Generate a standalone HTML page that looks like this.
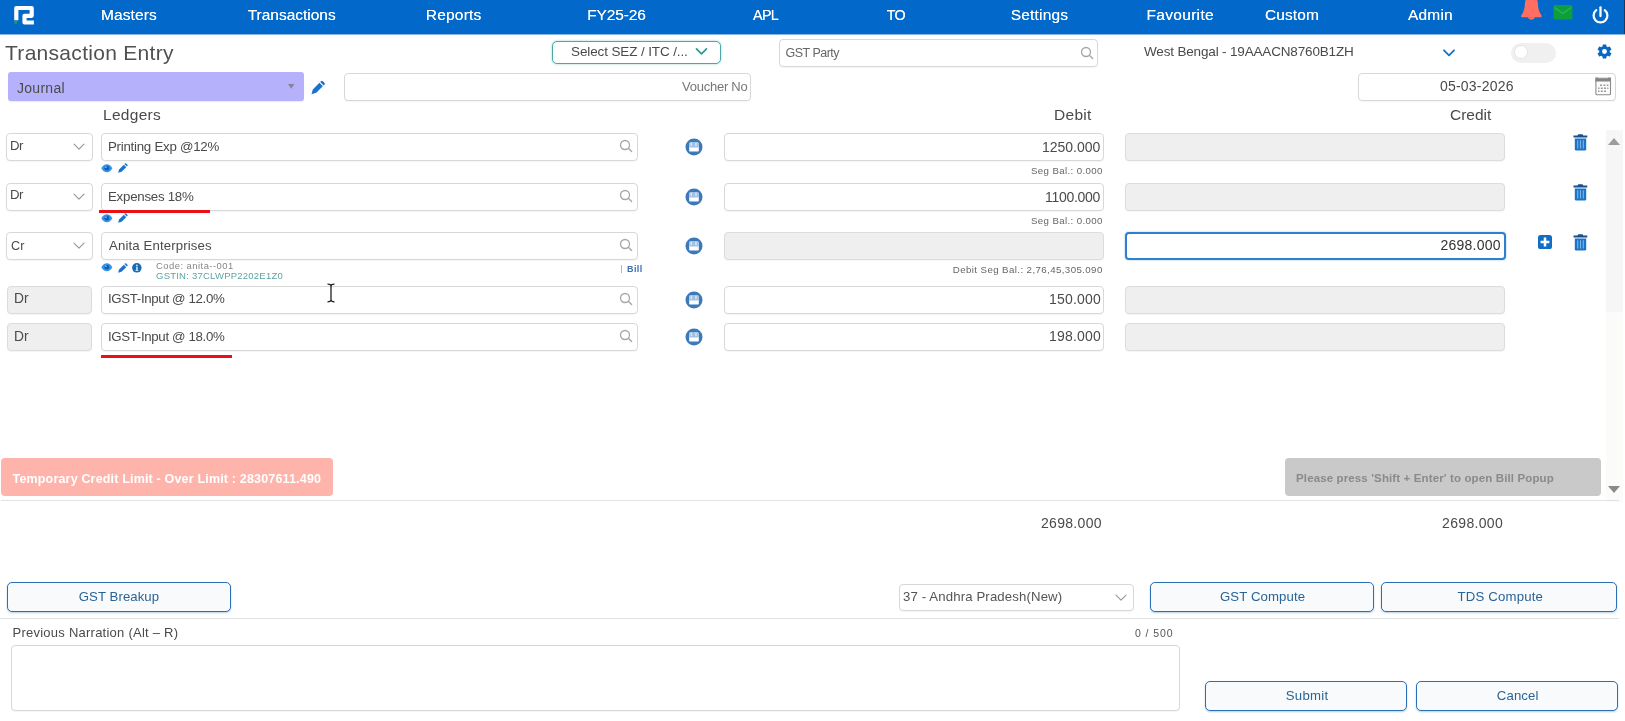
<!DOCTYPE html>
<html lang="en"><head><meta charset="utf-8"><title>Transaction Entry</title>
<style>
html,body{margin:0;padding:0;background:#fff;}
body{width:1625px;height:721px;overflow:hidden;font-family:"Liberation Sans",Arial,sans-serif;}
#app{will-change:transform;position:relative;width:1625px;height:721px;overflow:hidden;background:#fff;}
#app *{box-sizing:border-box;}
.abs,.t,.box,.btn,.alert,.journal,.toggle,.hr,.red,header,svg{position:absolute;}
.t{white-space:nowrap;line-height:1;display:block;margin:0;padding:0;font-weight:400;text-decoration:none;}
.t.nav{text-shadow:0 0 .6px rgba(255,255,255,.8);}
header{background:#0268c9;}
.box{border:1px solid #d8d8d8;border-radius:4px;background:#fff;box-shadow:0 1px 1px rgba(0,0,0,.04);}
.box.dis{background:#efefef;border-color:#dcdcdc;}
.box.focus{border:2px solid #2f7fcf;box-shadow:0 0 2px rgba(47,127,207,.5);}
.box.sez{border:1.5px solid #4aa9a4;border-radius:5px;box-shadow:0 0 2.5px rgba(74,169,164,.55);}
.journal{background:#b5b2fb;border-radius:3px;box-shadow:0 1px 1px rgba(0,0,0,.08);}
.toggle{border-radius:10px;background:#f0f0f0;}
.alert{border-radius:4px;}
.alert.pink{background:#ffb4ab;}
.alert.grey{background:#c9c9c9;}
.btn{border:1px solid #2a6fb3;border-radius:5px;background:#f8fafc;box-shadow:0 1px 2px rgba(42,111,179,.35);}
.hr{height:1px;background:#dde3e6;}
.red{background:#ea1016;height:3px;}
svg{overflow:visible;}
</style></head>
<body>
<div id="app">
<header style="left:0px;top:0px;width:1625px;height:34px;">
  <div class="abs" style="left:1624px;top:0;width:1px;height:34px;background:#123a66"></div>
  <a class="t nav" style="left:101px;top:7.38px;font-size:15.5px;color:#fff;letter-spacing:0.105px;">Masters</a>
  <a class="t nav" style="left:247.7px;top:7.38px;font-size:15.5px;color:#fff;letter-spacing:-0.010px;">Transactions</a>
  <a class="t nav" style="left:425.8px;top:7.38px;font-size:15.5px;color:#fff;letter-spacing:0.196px;">Reports</a>
  <a class="t nav" style="left:587.3px;top:7.38px;font-size:15.5px;color:#fff;letter-spacing:-0.155px;">FY25-26</a>
  <a class="t nav" style="left:753px;top:8.4px;font-size:14.3px;color:#fff;letter-spacing:-0.636px;">APL</a>
  <a class="t nav" style="left:886.8px;top:8.4px;font-size:14.3px;color:#fff;letter-spacing:-0.775px;">TO</a>
  <a class="t nav" style="left:1010.8px;top:7.38px;font-size:15.5px;color:#fff;letter-spacing:0.178px;">Settings</a>
  <a class="t nav" style="left:1146.5px;top:7.38px;font-size:15.5px;color:#fff;letter-spacing:0.314px;">Favourite</a>
  <a class="t nav" style="left:1265px;top:7.38px;font-size:15.5px;color:#fff;letter-spacing:0.102px;">Custom</a>
  <a class="t nav" style="left:1408px;top:7.38px;font-size:15.5px;color:#fff;letter-spacing:0.172px;">Admin</a>
  <svg class="logo" style="left:0px;top:0px" width="60" height="34" viewBox="0 0 60 34"><path d="M16.300 20.300V8H31.700V15.800H24.500V22.500H33.900" fill="none" stroke="#fff" stroke-width="4.200" stroke-linejoin="round"/><rect x="14.300" y="21" width="2.800" height="2.800" fill="#16a34a"/></svg>
  <svg class="bell" style="left:1519px;top:0px" width="26" height="24" viewBox="0 0 26 24"><path d="M12.400 -4c-4.200 0-6.300 3.200-6.500 7.600-.2 5.300-1.300 9-3.700 11.800v1.900h20.400v-1.900c-2.400-2.800-3.500-6.500-3.700-11.800C18.700-.8 16.600-4 12.400-4z" fill="#ff6e61"/><path d="M8.800 17.300a3.700 3.200 0 0 0 7.200 0z" fill="#ff6e61"/></svg>
  <svg class="mail" style="left:1553px;top:4px" width="20" height="16" viewBox="0 0 20 16"><rect x="0.400" y="0.900" width="19" height="14.500" rx="1.500" fill="#0d9f3c"/><path d="M1.500 3.500l8.400 6 8.400-6" fill="none" stroke="#2bb55a" stroke-width="1.300"/></svg>
  <svg class="power" style="left:1590px;top:4.5px" width="22" height="22" viewBox="0 0 22 22"><path d="M6.300 5.100a6.900 6.900 0 1 0 8.400 0" fill="none" stroke="#fff" stroke-width="2.200" stroke-linecap="round"/><path d="M10.500 2.300v8.700" stroke="#fff" stroke-width="2.300" stroke-linecap="round"/></svg>
</header>
<div class="box sez" style="left:552px;top:41px;width:169px;height:23px;">
  <span class="t" style="left:18px;top:2.87px;font-size:13.5px;color:#4a4a4a;letter-spacing:-0.126px;">Select SEZ / ITC /...</span>
  <svg style="left:142px;top:5px" width="13" height="9" viewBox="0 0 13 9"><path d="M1.500 1.800l5 5 5-5" fill="none" stroke="#2a9b95" stroke-width="1.700" stroke-linecap="round" stroke-linejoin="round"/></svg>
</div>
<div class="box input" style="left:779px;top:39px;width:319px;height:28px;">
  <span class="t" style="left:5.5px;top:7.22px;font-size:12.5px;color:#666;letter-spacing:-0.512px;">GST Party</span>
  <svg class="search" style="left:299.6px;top:5.7px" width="15" height="15" viewBox="0 0 15 15"><circle cx="6" cy="6" r="4.500" fill="none" stroke="#a6a6a6" stroke-width="1.300"/><path d="M9.300 9.300l3.300 3.300" stroke="#a6a6a6" stroke-width="1.400" stroke-linecap="round"/></svg>
</div>
<div class="toggle" style="left:1511px;top:43px;width:45px;height:20px;">
  <div class="abs knob" style="left:2.5px;top:1.5px;width:14.5px;height:14.5px;border-radius:50%;background:#fff;border:1px solid #e4e4e4;"></div>
</div>
<div class="journal" style="left:8px;top:72px;width:296px;height:29px;">
  <span class="t" style="left:9px;top:8.65px;font-size:14px;color:#4a4a4a;letter-spacing:0.282px;">Journal</span>
  <svg class="caret" style="left:280.2px;top:12.1px" width="6.4" height="4.8" viewBox="0 0 7 5"><path d="M0 0h7L3.500 5z" fill="#84839f"/></svg>
</div>
<div class="box input" style="left:344px;top:73px;width:407px;height:28px;">
  <span class="t" style="left:337px;top:5.75px;font-size:13px;color:#777;letter-spacing:-0.245px;">Voucher No</span>
</div>
<div class="box input" style="left:1357.5px;top:73px;width:258.5px;height:28px;">
  <span class="t" style="left:81.5px;top:5.15px;font-size:14px;color:#4a4a4a;letter-spacing:0.208px;">05-03-2026</span>
  <svg class="cal" style="left:236.5px;top:3px" width="17" height="19" viewBox="0 0 17 19"><rect x="0.900" y="1.300" width="14.600" height="16.400" rx="1" fill="#fbfbfb" stroke="#8c8c8c" stroke-width="1.100"/><path d="M0.400 0.600h2.200l1 1h9l1-1h2.400v4H0.400z" fill="#858585"/><path d="M5 8.300h2M8.400 8.300h2M11.800 8.300h1.600M3 11.200h1.500M5.800 11.200h2M9 11.200h2M12.200 11.200h1.200M3 14.200h1.500M5.800 14.200h2M9 14.200h2" stroke="#9a9a9a" stroke-width="1.400"/></svg>
</div>
<div class="row" id="row1">
<div class="box select" style="left:6px;top:133px;width:87px;height:28px;">
  <span class="t" style="left:3px;top:4.83px;font-size:13.2px;color:#4a4a4a;letter-spacing:-0.524px;">Dr</span>
  <svg class="chev" style="left:66px;top:9.2px" width="12" height="8" viewBox="0 0 12 8"><path d="M1 1.200l5 5 5-5" fill="none" stroke="#9a9a9a" stroke-width="1.200" stroke-linecap="round" stroke-linejoin="round"/></svg>
</div>
<div class="box input ledger" style="left:101px;top:133px;width:537px;height:28px;">
  <span class="t" style="left:6px;top:6.24px;font-size:13.3px;color:#4a4a4a;letter-spacing:-0.261px;">Printing Exp @12%</span>
  <svg class="search" style="left:516.9px;top:5.4px" width="15" height="15" viewBox="0 0 15 15"><circle cx="6" cy="6" r="4.500" fill="none" stroke="#a6a6a6" stroke-width="1.300"/><path d="M9.300 9.300l3.300 3.300" stroke="#a6a6a6" stroke-width="1.400" stroke-linecap="round"/></svg>
</div>
<div class="box input" style="left:724px;top:133px;width:380px;height:28px;">
  <span class="t" style="left:317px;top:5.9px;font-size:14px;color:#4a4a4a;letter-spacing:-0.015px;">1250.000</span>
</div>
<div class="box dis" style="left:1125px;top:133px;width:380px;height:28px;"></div>
<span class="t small" style="left:1031px;top:165.69px;font-size:9.7px;color:#666;letter-spacing:0.367px;">Seg Bal.: 0.000</span>
<svg class="narr" style="left:685.3px;top:137.7px" width="18" height="18" viewBox="0 0 18 18"><circle cx="9" cy="9" r="8.500" fill="#3b79b8"/><rect x="4.200" y="4.600" width="9.600" height="9" rx="1.200" fill="#fff"/><rect x="4.200" y="4.600" width="9.600" height="5" rx="1" fill="#9fc0e4"/><rect x="5.600" y="4.600" width="1.500" height="3.600" fill="#d7e6f5"/><rect x="10.200" y="4.600" width="1.500" height="3.600" fill="#d7e6f5"/></svg>
<svg class="eye" style="left:101.2px;top:163.9px" width="11.700" height="8.500" viewBox="0 0 12 9"><path d="M0.200 4.500C1.600 1.700 3.700 0.300 6 0.300s4.400 1.400 5.800 4.200C10.400 7.300 8.300 8.700 6 8.700S1.600 7.300 0.200 4.500z" fill="#3495e6"/><circle cx="6" cy="4.400" r="2.600" fill="#0f5fb4"/><circle cx="5" cy="3.400" r="0.900" fill="#7cc0f2"/></svg>
<svg class="pencil" style="left:117.7px;top:163px" width="9.6" height="10.3" viewBox="0 0 15 15"><path d="M0.200 14.800l1.500-5.300 7.400-7.400 3.800 3.800-7.400 7.400z" fill="#1c72c9"/><path d="M10 1.200l.9-.9a1.400 1.400 0 0 1 2 0l1.800 1.800a1.400 1.400 0 0 1 0 2l-.9.900z" fill="#1c72c9"/></svg>
<svg class="trash" style="left:1573.3px;top:134px" width="15" height="17" viewBox="0 0 15 17"><path d="M5.300 0.200h4.200l0.800 1.300h4v1.900H0.500V1.500h4z" fill="#1a4f8c"/><path d="M1.800 4.500h11.400v10.700a1.300 1.300 0 0 1-1.300 1.300H3.100a1.300 1.300 0 0 1-1.300-1.300z" fill="#1a74ca"/><path d="M4.700 6.300v8.200M7.500 6.300v8.200M10.300 6.300v8.200" stroke="#7fb4e6" stroke-width="1.100"/></svg>
</div>
<div class="row" id="row2">
<div class="box select" style="left:6px;top:183px;width:87px;height:28px;">
  <span class="t" style="left:3px;top:4.33px;font-size:13.2px;color:#4a4a4a;letter-spacing:-0.524px;">Dr</span>
  <svg class="chev" style="left:66px;top:9.2px" width="12" height="8" viewBox="0 0 12 8"><path d="M1 1.200l5 5 5-5" fill="none" stroke="#9a9a9a" stroke-width="1.200" stroke-linecap="round" stroke-linejoin="round"/></svg>
</div>
<div class="box input ledger" style="left:101px;top:183px;width:537px;height:28px;">
  <span class="t" style="left:6px;top:6.24px;font-size:13.3px;color:#4a4a4a;letter-spacing:-0.262px;">Expenses 18%</span>
  <svg class="search" style="left:516.9px;top:5.4px" width="15" height="15" viewBox="0 0 15 15"><circle cx="6" cy="6" r="4.500" fill="none" stroke="#a6a6a6" stroke-width="1.300"/><path d="M9.300 9.300l3.300 3.300" stroke="#a6a6a6" stroke-width="1.400" stroke-linecap="round"/></svg>
</div>
<div class="box input" style="left:724px;top:183px;width:380px;height:28px;">
  <span class="t" style="left:320px;top:5.9px;font-size:14px;color:#4a4a4a;letter-spacing:-0.295px;">1100.000</span>
</div>
<div class="box dis" style="left:1125px;top:183px;width:380px;height:28px;"></div>
<span class="t small" style="left:1031px;top:215.69px;font-size:9.7px;color:#666;letter-spacing:0.367px;">Seg Bal.: 0.000</span>
<svg class="narr" style="left:685.3px;top:187.7px" width="18" height="18" viewBox="0 0 18 18"><circle cx="9" cy="9" r="8.500" fill="#3b79b8"/><rect x="4.200" y="4.600" width="9.600" height="9" rx="1.200" fill="#fff"/><rect x="4.200" y="4.600" width="9.600" height="5" rx="1" fill="#9fc0e4"/><rect x="5.600" y="4.600" width="1.500" height="3.600" fill="#d7e6f5"/><rect x="10.200" y="4.600" width="1.500" height="3.600" fill="#d7e6f5"/></svg>
<svg class="eye" style="left:101.2px;top:213.5px" width="11.700" height="8.500" viewBox="0 0 12 9"><path d="M0.200 4.500C1.600 1.700 3.700 0.300 6 0.300s4.400 1.400 5.800 4.200C10.400 7.300 8.300 8.700 6 8.700S1.600 7.300 0.200 4.500z" fill="#3495e6"/><circle cx="6" cy="4.400" r="2.600" fill="#0f5fb4"/><circle cx="5" cy="3.400" r="0.900" fill="#7cc0f2"/></svg>
<svg class="pencil" style="left:117.7px;top:212.6px" width="9.6" height="10.3" viewBox="0 0 15 15"><path d="M0.200 14.800l1.500-5.300 7.400-7.400 3.800 3.800-7.400 7.400z" fill="#1c72c9"/><path d="M10 1.200l.9-.9a1.400 1.400 0 0 1 2 0l1.800 1.800a1.400 1.400 0 0 1 0 2l-.9.900z" fill="#1c72c9"/></svg>
<svg class="trash" style="left:1573.3px;top:184px" width="15" height="17" viewBox="0 0 15 17"><path d="M5.300 0.200h4.200l0.800 1.300h4v1.900H0.500V1.500h4z" fill="#1a4f8c"/><path d="M1.800 4.500h11.400v10.700a1.300 1.300 0 0 1-1.300 1.300H3.100a1.300 1.300 0 0 1-1.300-1.300z" fill="#1a74ca"/><path d="M4.700 6.300v8.200M7.500 6.300v8.200M10.300 6.300v8.200" stroke="#7fb4e6" stroke-width="1.100"/></svg>
<div class="red" style="left:99px;top:210px;width:111px;"></div>
</div>
<div class="row" id="row3">
<div class="box select" style="left:6px;top:232px;width:87px;height:28px;">
  <span class="t" style="left:4px;top:6.63px;font-size:12.6px;color:#4a4a4a;letter-spacing:0.205px;">Cr</span>
  <svg class="chev" style="left:66px;top:9.2px" width="12" height="8" viewBox="0 0 12 8"><path d="M1 1.200l5 5 5-5" fill="none" stroke="#9a9a9a" stroke-width="1.200" stroke-linecap="round" stroke-linejoin="round"/></svg>
</div>
<div class="box input ledger" style="left:101px;top:232px;width:537px;height:28px;">
  <span class="t" style="left:7px;top:5.83px;font-size:13.2px;color:#4a4a4a;letter-spacing:0.136px;">Anita Enterprises</span>
  <svg class="search" style="left:516.9px;top:5.4px" width="15" height="15" viewBox="0 0 15 15"><circle cx="6" cy="6" r="4.500" fill="none" stroke="#a6a6a6" stroke-width="1.300"/><path d="M9.300 9.300l3.300 3.300" stroke="#a6a6a6" stroke-width="1.400" stroke-linecap="round"/></svg>
</div>
<div class="box dis" style="left:724px;top:232px;width:380px;height:28px;"></div>
<div class="box focus" style="left:1125px;top:231.5px;width:380.5px;height:28.5px;">
  <span class="t" style="left:313.5px;top:4.65px;font-size:14px;color:#333;letter-spacing:0.235px;">2698.000</span>
</div>
<span class="t small" style="left:952.8px;top:264.89px;font-size:9.7px;color:#666;letter-spacing:0.405px;">Debit Seg Bal.: 2,76,45,305.090</span>
<span class="t small" style="left:156px;top:260.94px;font-size:9.4px;color:#858585;letter-spacing:0.492px;">Code: anita--001</span>
<span class="t small" style="left:156px;top:270.96px;font-size:9.5px;color:#5aa5a5;letter-spacing:0.238px;">GSTIN: 37CLWPP2202E1Z0</span>
<span class="t small" style="left:627px;top:265.48px;font-size:9px;color:#3a72b4;font-weight:700;letter-spacing:0.433px;">Bill</span>
<svg class="narr" style="left:685.3px;top:236.7px" width="18" height="18" viewBox="0 0 18 18"><circle cx="9" cy="9" r="8.500" fill="#3b79b8"/><rect x="4.200" y="4.600" width="9.600" height="9" rx="1.200" fill="#fff"/><rect x="4.200" y="4.600" width="9.600" height="5" rx="1" fill="#9fc0e4"/><rect x="5.600" y="4.600" width="1.500" height="3.600" fill="#d7e6f5"/><rect x="10.200" y="4.600" width="1.500" height="3.600" fill="#d7e6f5"/></svg>
<svg class="eye" style="left:101.2px;top:263.4px" width="11.700" height="8.500" viewBox="0 0 12 9"><path d="M0.200 4.500C1.600 1.700 3.700 0.300 6 0.300s4.400 1.400 5.800 4.200C10.400 7.300 8.300 8.700 6 8.700S1.600 7.300 0.200 4.500z" fill="#3495e6"/><circle cx="6" cy="4.400" r="2.600" fill="#0f5fb4"/><circle cx="5" cy="3.400" r="0.900" fill="#7cc0f2"/></svg>
<svg class="pencil" style="left:117.7px;top:262.5px" width="9.6" height="10.3" viewBox="0 0 15 15"><path d="M0.200 14.800l1.500-5.300 7.400-7.400 3.800 3.800-7.400 7.400z" fill="#1c72c9"/><path d="M10 1.200l.9-.9a1.400 1.400 0 0 1 2 0l1.800 1.800a1.400 1.400 0 0 1 0 2l-.9.900z" fill="#1c72c9"/></svg>
<svg class="info" style="left:132.4px;top:262.9px" width="9.700" height="9.700" viewBox="0 0 10 10"><circle cx="5" cy="5" r="4.900" fill="#1a6ab4"/><rect x="4.200" y="4.100" width="1.700" height="3.900" fill="#bfe3fa"/><circle cx="5" cy="2.500" r="1" fill="#bfe3fa"/><rect x="3.500" y="7.400" width="3.100" height="0.900" fill="#bfe3fa"/></svg>
<svg class="plus" style="left:1538px;top:234.9px" width="14" height="14" viewBox="0 0 14 14"><rect x="0" y="0" width="14" height="14" rx="2.600" fill="#0f6fc6"/><path d="M2.600 7h8.800M7 2.600v8.800" stroke="#fff" stroke-width="2.500"/></svg>
<svg class="trash" style="left:1573.3px;top:233.9px" width="15" height="17" viewBox="0 0 15 17"><path d="M5.300 0.200h4.200l0.800 1.300h4v1.900H0.500V1.500h4z" fill="#1a4f8c"/><path d="M1.800 4.500h11.400v10.700a1.300 1.300 0 0 1-1.300 1.300H3.100a1.300 1.300 0 0 1-1.300-1.300z" fill="#1a74ca"/><path d="M4.700 6.300v8.200M7.500 6.300v8.200M10.300 6.300v8.200" stroke="#7fb4e6" stroke-width="1.100"/></svg>
<div class="abs" style="left:620.5px;top:264.5px;width:1.3px;height:8.5px;background:#f59a9a"></div>
</div>
<div class="row" id="row4">
<div class="box dis" style="left:7px;top:286px;width:85px;height:28px;">
  <span class="t" style="left:6px;top:5.07px;font-size:13.8px;color:#4a4a4a;letter-spacing:0.036px;">Dr</span>
</div>
<div class="box input ledger" style="left:101px;top:286px;width:537px;height:28px;">
  <span class="t" style="left:6px;top:5.49px;font-size:13.3px;color:#4a4a4a;letter-spacing:-0.357px;">IGST-Input @ 12.0%</span>
  <svg class="search" style="left:516.9px;top:5.4px" width="15" height="15" viewBox="0 0 15 15"><circle cx="6" cy="6" r="4.500" fill="none" stroke="#a6a6a6" stroke-width="1.300"/><path d="M9.300 9.300l3.300 3.300" stroke="#a6a6a6" stroke-width="1.400" stroke-linecap="round"/></svg>
  <svg class="ibeam" style="left:224px;top:-4px" width="10" height="20" viewBox="0 0 10 20"><path d="M1.500 1.200c2 0 3.500.4 3.500 1.800v14c0 1.400-1.500 1.800-3.500 1.800M8.500 1.200c-2 0-3.500.4-3.500 1.800M8.500 18.800c-2 0-3.500-.4-3.500-1.800" fill="none" stroke="#222" stroke-width="1.300"/></svg>
</div>
<div class="box input" style="left:724px;top:286px;width:380px;height:28px;">
  <span class="t" style="left:324px;top:5.15px;font-size:14px;color:#4a4a4a;letter-spacing:0.197px;">150.000</span>
</div>
<div class="box dis" style="left:1125px;top:286px;width:380px;height:28px;"></div>
<svg class="narr" style="left:685.3px;top:290.7px" width="18" height="18" viewBox="0 0 18 18"><circle cx="9" cy="9" r="8.500" fill="#3b79b8"/><rect x="4.200" y="4.600" width="9.600" height="9" rx="1.200" fill="#fff"/><rect x="4.200" y="4.600" width="9.600" height="5" rx="1" fill="#9fc0e4"/><rect x="5.600" y="4.600" width="1.500" height="3.600" fill="#d7e6f5"/><rect x="10.200" y="4.600" width="1.500" height="3.600" fill="#d7e6f5"/></svg>
</div>
<div class="row" id="row5">
<div class="box dis" style="left:7px;top:323px;width:85px;height:28px;">
  <span class="t" style="left:6px;top:5.57px;font-size:13.8px;color:#4a4a4a;letter-spacing:0.036px;">Dr</span>
</div>
<div class="box input ledger" style="left:101px;top:323px;width:537px;height:28px;">
  <span class="t" style="left:6px;top:5.99px;font-size:13.3px;color:#4a4a4a;letter-spacing:-0.357px;">IGST-Input @ 18.0%</span>
  <svg class="search" style="left:516.9px;top:5.4px" width="15" height="15" viewBox="0 0 15 15"><circle cx="6" cy="6" r="4.500" fill="none" stroke="#a6a6a6" stroke-width="1.300"/><path d="M9.300 9.300l3.300 3.300" stroke="#a6a6a6" stroke-width="1.400" stroke-linecap="round"/></svg>
</div>
<div class="box input" style="left:724px;top:323px;width:380px;height:28px;">
  <span class="t" style="left:324px;top:5.15px;font-size:14px;color:#4a4a4a;letter-spacing:0.197px;">198.000</span>
</div>
<div class="box dis" style="left:1125px;top:323px;width:380px;height:28px;"></div>
<svg class="narr" style="left:685.3px;top:327.7px" width="18" height="18" viewBox="0 0 18 18"><circle cx="9" cy="9" r="8.500" fill="#3b79b8"/><rect x="4.200" y="4.600" width="9.600" height="9" rx="1.200" fill="#fff"/><rect x="4.200" y="4.600" width="9.600" height="5" rx="1" fill="#9fc0e4"/><rect x="5.600" y="4.600" width="1.500" height="3.600" fill="#d7e6f5"/><rect x="10.200" y="4.600" width="1.500" height="3.600" fill="#d7e6f5"/></svg>
<div class="red" style="left:101px;top:355px;width:131px;"></div>
</div>
<div class="alert pink" style="left:1px;top:458px;width:332px;height:38px;">
  <span class="t" style="left:11.5px;top:14.92px;font-size:12.5px;color:#fff;font-weight:700;letter-spacing:0.175px;">Temporary Credit Limit - Over Limit : 28307611.490</span>
</div>
<div class="alert grey" style="left:1284.5px;top:458px;width:316.5px;height:38px;">
  <span class="t" style="left:11.5px;top:15.27px;font-size:11.5px;color:#8a8a8a;font-weight:700;letter-spacing:0.130px;">Please press 'Shift + Enter' to open Bill Popup</span>
</div>
<div class="btn" style="left:7px;top:582px;width:224px;height:30px;">
  <span class="t" style="left:70.75px;top:7.08px;font-size:13.2px;color:#2a6496;letter-spacing:0.069px;">GST Breakup</span>
</div>
<div class="box select" style="left:899px;top:583.5px;width:235px;height:27px;">
  <span class="t" style="left:3px;top:5.58px;font-size:13.2px;color:#555;letter-spacing:0.132px;">37 - Andhra Pradesh(New)</span>
  <svg class="chev" style="left:215px;top:9px" width="12" height="8" viewBox="0 0 12 8"><path d="M1 1.200l5 5 5-5" fill="none" stroke="#9a9a9a" stroke-width="1.200" stroke-linecap="round" stroke-linejoin="round"/></svg>
</div>
<div class="btn" style="left:1150px;top:582px;width:224px;height:30px;">
  <span class="t" style="left:69px;top:7.08px;font-size:13.2px;color:#2a6496;letter-spacing:0.105px;">GST Compute</span>
</div>
<div class="btn" style="left:1381px;top:582px;width:236px;height:30px;">
  <span class="t" style="left:75.5px;top:7.08px;font-size:13.2px;color:#2a6496;letter-spacing:0.179px;">TDS Compute</span>
</div>
<div class="box textarea" style="left:11px;top:644.5px;width:1168.5px;height:66px;"></div>
<div class="btn" style="left:1205px;top:681px;width:202px;height:30px;">
  <span class="t" style="left:79.8px;top:6.63px;font-size:13.2px;color:#2a6496;letter-spacing:0.244px;">Submit</span>
</div>
<div class="btn" style="left:1415.5px;top:681px;width:202.5px;height:30px;">
  <span class="t" style="left:80.3px;top:6.63px;font-size:13.2px;color:#2a6496;letter-spacing:0.116px;">Cancel</span>
</div>
<h1 class="t" style="left:5px;top:41.62px;font-size:21px;color:#505050;letter-spacing:0.295px;">Transaction Entry</h1>
<span class="t" style="left:1144px;top:45.07px;font-size:13.5px;color:#4a4a4a;letter-spacing:-0.165px;">West Bengal - 19AAACN8760B1ZH</span>
<span class="t colhead" style="left:103px;top:106.88px;font-size:15.5px;color:#4a4a4a;letter-spacing:0.289px;">Ledgers</span>
<span class="t colhead" style="left:1054px;top:106.88px;font-size:15.5px;color:#4a4a4a;letter-spacing:0.281px;">Debit</span>
<span class="t colhead" style="left:1450px;top:106.88px;font-size:15.5px;color:#4a4a4a;letter-spacing:-0.008px;">Credit</span>
<span class="t total" style="left:1041px;top:515.65px;font-size:14px;color:#4a4a4a;letter-spacing:0.306px;">2698.000</span>
<span class="t total" style="left:1442px;top:515.65px;font-size:14px;color:#4a4a4a;letter-spacing:0.342px;">2698.000</span>
<label class="t" style="left:12.5px;top:626px;font-size:13px;color:#4a4a4a;letter-spacing:0.244px;">Previous Narration (Alt – R)</label>
<span class="t small" style="left:1135px;top:627.91px;font-size:10.5px;color:#555;letter-spacing:0.905px;">0 / 500</span>
<svg style="left:1442px;top:47.5px" width="14" height="10" viewBox="0 0 14 10"><path d="M2 2.300l5 5 5-5" fill="none" stroke="#1f6fc0" stroke-width="1.800" stroke-linecap="round" stroke-linejoin="round"/></svg>
<svg class="gear" style="left:1596px;top:43px" width="17" height="17" viewBox="0 0 24 24"><path fill="#0b66c3" d="M19.430 12.980c.040-.320.070-.640.070-.980s-.030-.660-.070-.980l2.110-1.650a.5.500 0 0 0 .120-.640l-2-3.460a.5.500 0 0 0-.610-.220l-2.490 1a7.300 7.300 0 0 0-1.690-.980l-.380-2.650A.49.490 0 0 0 14 2h-4a.49.490 0 0 0-.490.420l-.380 2.650c-.610.250-1.170.590-1.690.980l-2.490-1a.5.500 0 0 0-.610.220l-2 3.460a.5.500 0 0 0 .120.640l2.110 1.650c-.040.320-.070.650-.070.980s.030.660.070.980l-2.110 1.650a.5.500 0 0 0-.120.640l2 3.460c.120.220.390.300.610.220l2.490-1c.520.400 1.080.730 1.690.980l.380 2.650c.030.240.240.420.490.420h4c.250 0 .460-.180.490-.420l.380-2.650c.610-.250 1.170-.590 1.690-.980l2.490 1c.230.090.490 0 .610-.220l2-3.460a.5.500 0 0 0-.120-.640l-2.110-1.650zM12 15.500a3.500 3.500 0 1 1 0-7 3.500 3.500 0 0 1 0 7z"/></svg>
<svg class="pencil" style="left:311.2px;top:80.8px" width="14" height="13.4" viewBox="0 0 15 15"><path d="M0.200 14.800l1.500-5.300 7.400-7.400 3.800 3.800-7.400 7.400z" fill="#1c72c9"/><path d="M10 1.200l.9-.9a1.400 1.400 0 0 1 2 0l1.800 1.800a1.400 1.400 0 0 1 0 2l-.9.900z" fill="#1c72c9"/></svg>
<div class="abs" style="left:0;top:34px;width:1625px;height:1px;background:#86b6e5"></div>
<div class="abs scrolltrack" style="left:1606px;top:130px;width:17px;height:372px;background:#fbfbfa"></div>
<div class="abs scrollthumb" style="left:1606px;top:130px;width:17px;height:182px;background:#f6f6f6"></div>
<svg style="left:1608px;top:138px" width="12" height="7" viewBox="0 0 12 7"><path d="M0 7L6 0l6 7z" fill="#9b9b9b"/></svg>
<svg style="left:1608px;top:485.500px" width="12" height="7" viewBox="0 0 12 7"><path d="M0 0h12L6 7z" fill="#8a8a8a"/></svg>
<div class="hr" style="left:1px;top:500px;width:1618px;"></div>
<div class="hr" style="left:0;top:618px;width:1619px;"></div>
</div>
</body></html>
